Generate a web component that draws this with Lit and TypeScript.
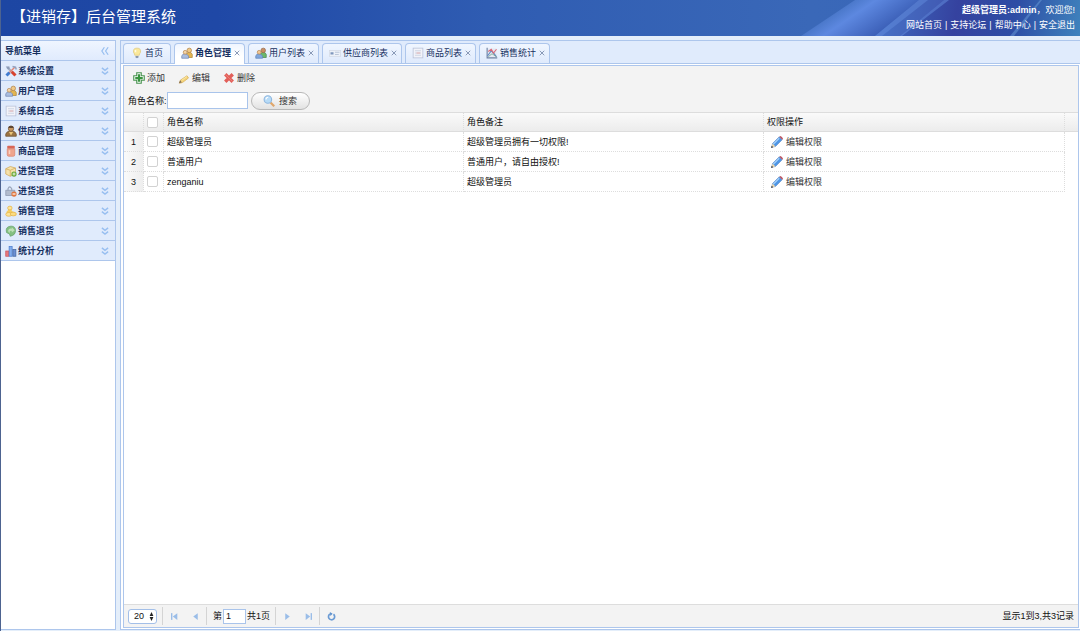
import { LitElement, html, css, svg, TemplateResult } from 'lit';
import { customElement, property, state } from 'lit/decorators.js';

const art: Record<string, TemplateResult> = {
  tools: svg`<path d="M3 3l10 10" stroke="#a3aec4" stroke-width="3"/><path d="M1 2l3 4 2-1 0-3z" fill="#8c9bb8"/><path d="M9 9l5 5" stroke="#d8422e" stroke-width="4"/><path d="M13 3L5 11" stroke="#e58471" stroke-width="2"/><path d="M10 2l4 1 1 3" stroke="#93a2bf" stroke-width="2" fill="none"/><path d="M6 10l-4 4" stroke="#3f7bd0" stroke-width="4"/>`,
  users: svg`<path d="M7 14v-4q1-3 4-3t4 3v4z" fill="#e3b552" stroke="#b08a3c"/><circle cx="11" cy="4.500" r="3" fill="#f0c988" stroke="#b08346"/><path d="M1 15v-3q1-3 4-3t5 3v3z" fill="#a9bddf" stroke="#7689b4"/><circle cx="5.500" cy="7" r="2.500" fill="#f3d4a6" stroke="#b98a56"/>`,
  usersGreen: svg`<path d="M7 14v-4q1-3 4-3t4 3v4z" fill="#6cb868" stroke="#4c8955"/><circle cx="11" cy="4.500" r="3" fill="#ca8f62" stroke="#96694a"/><path d="M1 15v-3q1-3 4-3t5 3v3z" fill="#7fa6dc" stroke="#6488bb"/><circle cx="5.500" cy="7" r="2.500" fill="#efc795" stroke="#b98a56"/>`,
  log: svg`<rect x="1.500" y="1.500" width="13" height="13" fill="#f2f3f9" stroke="#b6bfd6"/><path d="M4 5h8M4 8h8M4 11h8" stroke="#c3cbde"/><path d="M6 8h5" stroke="#e6a19c"/>`,
  person: svg`<path d="M1 15v-3q1-4 7-4t7 4v3z" fill="#9b7443" stroke="#6d5233"/><path d="M5 9h6l-3 5z" fill="#ecc678"/><circle cx="8" cy="5" r="3.500" fill="#c99860" stroke="#6b4d31"/><path d="M4.500 4q0-3 3.500-3t3.500 3z" fill="#5e4733"/>`,
  jar: svg`<rect x="3" y="1" width="10" height="4" rx="1" fill="#d96656"/><path d="M3 5h10v8q0 2-2 2H5q-2 0-2-2z" fill="#efa48d" stroke="#db8573"/><path d="M6 7v5" stroke="#fbd1c1" stroke-width="2"/>`,
  boxAdd: svg`<path d="M1 5l6-3 7 2v8l-7 3-6-3z" fill="#f6e2ab" stroke="#d0a858"/><path d="M1 5l6 2 7-3M7 7v8" stroke="#d0a858" fill="none"/><circle cx="12" cy="12" r="3.500" fill="#6aa93a"/><path d="M12 10v4M10 12h4" stroke="#fff"/>`,
  bagOut: svg`<path d="M1 7h12l1 7H1z" fill="#b3bccd" stroke="#8d98af"/><path d="M4 8V5q2-5 5 0v3" stroke="#98a4ba" fill="none" stroke-width="1.500"/><circle cx="12" cy="12" r="3.500" fill="#e0773f"/><path d="M10 12h4" stroke="#fff" stroke-width="1.500"/>`,
  coins: svg`<path d="M4 3q4-3 5 0v5l6 3v3H2V9l2-2z" fill="#f5ce61"/><ellipse cx="6.500" cy="4" rx="3" ry="2.500" fill="#fce498" stroke="#e5b54f"/><ellipse cx="5" cy="12.500" rx="4" ry="2.500" fill="#fce498" stroke="#e5b54f"/><ellipse cx="11" cy="12" rx="4" ry="2.500" fill="#fbdc80" stroke="#e5b54f"/>`,
  returns: svg`<path d="M8 1.500q6 0 6 6t-7 7.500l-1-3-4-2q-2-8 6-8.500z" fill="#84c081" stroke="#68a26c"/><path d="M4 8q1-4 5-3V3l4 4-4 3V8q-3-1-3 3" fill="#bfe0b7"/>`,
  chart: svg`<rect x="1" y="8" width="4" height="7" fill="#e8787b" stroke="#cb5560"/><rect x="5.500" y="2" width="4" height="13" fill="#83aeed" stroke="#4c7cce"/><rect x="10.500" y="6" width="4" height="9" fill="#6a8fd4" stroke="#45669f"/>`,
  bulb: svg`<path d="M5 11q0-2-1.500-3.500Q2 1.500 8 1.500t4.500 6Q11 9 11 11z" fill="#fae89a" stroke="#e0ca7d"/><path d="M6 4v3" stroke="#fffbe2" stroke-width="2"/><path d="M6 12h4v2l-2 1-2-1z" fill="#8996aa"/>`,
  card: svg`<rect x="0.500" y="4.500" width="15" height="8" fill="#edf1f8" stroke="#d3dae6"/><path d="M2 7h4v3H2z" fill="#7f97bd"/><path d="M8 7h6M8 10h5" stroke="#a9b7cf"/>`,
  line: svg`<path d="M2 2h12v11H2z" fill="#e5e9f3"/><path d="M1.500 1v13.500H15" stroke="#6f82a2" stroke-width="1.500" fill="none"/><path d="M2 12l5-7 3 3 4 5" stroke="#5f86c0" stroke-width="1.500" fill="none"/><path d="M3 6l4-3 3 5 4-5" stroke="#d96a79" stroke-width="1.500" fill="none"/><path d="M3 13l5-4 6 4" stroke="#6a9c85" fill="none"/>`,
  add: svg`<path d="M5 1h6v4h4v6h-4v4H5v-4H1V5h4z" fill="#fff" stroke="#4a9450" stroke-width="1.500"/><path d="M8 3v10M3 8h10" stroke="#39943e" stroke-width="3"/>`,
  pencil: svg`<path d="M2 15l1-4 9-6 2 3-8 6z" fill="#f4d37a" stroke="#d9b25c"/><path d="M1 15l2-4 2 3z" fill="#86735e"/><path d="M5 11l7-5" stroke="#fff0b3"/>`,
  cross: svg`<path d="M3 3l10 10M13 3L3 13" stroke="#e25f59" stroke-width="4.500"/><path d="M3 3l10 10" stroke="#ee8780" stroke-width="1"/>`,
  search: svg`<path d="M10 10l5 5" stroke="#dfa66b" stroke-width="3"/><circle cx="6.500" cy="6" r="5" fill="#b7dbf7" stroke="#8fb7df" stroke-width="1.500"/><path d="M4 6q0-3 3-3" stroke="#fff" fill="none" stroke-width="1.500"/>`,
  bluePencil: svg`<path d="M1 15l1-5 9-9 4 4-9 9z" fill="#4f96e6" stroke="#5b84bd" stroke-width=".7"/><path d="M3 11l8-8" stroke="#a8d3fa" stroke-width="1.500"/><path d="M11 1l4 4 1-2-3-3z" fill="#b9525f"/><path d="M1 15l1-5 4 4z" fill="#efd7ac"/><path d="M0 16l1-3 2 2z" fill="#333"/>`,
  down: svg`<path d="M3 3l5 4 5-4M3 9l5 4 5-4" stroke="#98bff0" stroke-width="2.200" fill="none"/>`,
  left: svg`<path d="M7 2L3 8l4 6M13 2L9 8l4 6" stroke="#98bff0" stroke-width="2" fill="none"/>`,
  close: svg`<path d="M2 2l12 12M14 2L2 14" stroke="#8293b2" stroke-width="2.500"/>`,
  first: svg`<path d="M3 2v12" stroke="#9abde8" stroke-width="2.500"/><path d="M13 2v12L5 8z" fill="#9abde8"/>`,
  prev: svg`<path d="M12 2v12L4 8z" fill="#9abde8"/>`,
  next: svg`<path d="M4 2v12l8-6z" fill="#9abde8"/>`,
  last: svg`<path d="M13 2v12" stroke="#9abde8" stroke-width="2.500"/><path d="M3 2v12l8-6z" fill="#9abde8"/>`,
  refresh: svg`<path d="M11.500 4a5.500 5.500 0 1 1-6-.5" stroke="#6b9bd4" stroke-width="3" fill="none"/><path d="M5 0l5 3-4 4z" fill="#5a8fcd"/>`,
  updown: svg`<path d="M8 0l6 7H2zM8 16l6-7H2z" fill="#222"/>`,
};

@customElement('app-icon')
class AppIcon extends LitElement {
  @property() name = '';
  static styles = css`
    :host { display: block; flex: none; width: 12px; height: 12px; }
    svg { display: block; width: 100%; height: 100%; }
  `;
  render() {
    return html`<svg viewBox="0 0 16 16" preserveAspectRatio="none" aria-hidden="true">${art[this.name]}</svg>`;
  }
}

const menu = [
  ['tools', '系统设置'], ['users', '用户管理'], ['log', '系统日志'], ['person', '供应商管理'], ['jar', '商品管理'],
  ['boxAdd', '进货管理'], ['bagOut', '进货退货'], ['coins', '销售管理'], ['returns', '销售退货'], ['chart', '统计分析'],
];
const tabs = [
  ['bulb', '首页'], ['users', '角色管理'], ['usersGreen', '用户列表'], ['card', '供应商列表'], ['log', '商品列表'], ['line', '销售统计'],
];
const rows = [
  ['超级管理员', '超级管理员拥有一切权限!'],
  ['普通用户', '普通用户，请自由授权!'],
  ['zenganiu', '超级管理员'],
];

@customElement('app-root')
class AppRoot extends LitElement {
  @state() private active = 1;

  static styles = css`
    :host {
      display: flex; flex-direction: column; height: 100vh; box-sizing: border-box; overflow: hidden;
      background: #e4eefa; color: #111; border-left: 1px solid #4d6390;
      font: 9px/12px "Liberation Sans", "Noto Sans CJK SC", sans-serif;
    }
    * { box-sizing: border-box; }
    button, input, select { font: inherit; color: inherit; margin: 0; padding: 0; }
    button { border: 0; background: none; display: flex; align-items: center; white-space: nowrap; }
    a { color: inherit; text-decoration: none; }
    .top {
      position: relative; flex: none; height: 36px; padding: 0 5px 0 10px; color: #fff;
      display: flex; justify-content: space-between; align-items: center;
      background: linear-gradient(90deg, #1d46a3 0%, #1f48a6 20%, #2f5cb2 45%, #3a68b8 75%, #3765ba 100%);
    }
    .beams { position: absolute; right: 0; top: 0; width: 280px; height: 36px; }
    .title { position: relative; margin: 0; padding-bottom: 3px; font-size: 15px; line-height: 20px; font-weight: 400; }
    .account { position: relative; text-align: right; line-height: 15px; }
    .links { display: flex; gap: 3px; }
    .work { flex: 1; min-height: 0; display: flex; gap: 4px; padding: 4px 0 1px; }
    .side { flex: none; width: 115px; border: 1px solid #adc6ec; border-left: 0; background: #fff; }
    .sidehead, .item {
      width: 100%; height: 20px; border-bottom: 1px solid #adc6ec; padding: 0 5px 0 4px;
      display: flex; align-items: center; font-weight: 700; color: #17305f; background: #e0ebfc;
    }
    .sidehead { background: linear-gradient(#eff5ff, #e0ebfd); margin: 0; font-size: 9px; }
    .sidehead .label { padding-left: 0; }
    .label { flex: 1; text-align: left; padding-left: 1px; }
    .arrow { width: 10px; height: 10px; }
    .main { flex: 1; min-width: 0; display: flex; flex-direction: column; border: 1px solid #adc6ec; border-right: 0; background: #fff; }
    .tabs { flex: none; height: 23px; display: flex; align-items: flex-end; gap: 3px; padding: 0 2px; background: #e0ebfc; border-bottom: 1px solid #adc6ec; }
    .tab {
      height: 20px; display: flex; align-items: center; border: 1px solid #adc6ec; border-bottom: 0; border-radius: 4px 4px 0 0;
      background: linear-gradient(#f0f6ff, #dfeafc); color: #17305f; padding: 0 4px 2px 6px;
    }
    .tab.home { padding: 0 7px 2px; }
    .tab.on { background: linear-gradient(#eff5ff, #fff 60%); height: 21px; margin-bottom: -1px; padding-bottom: 3px; font-weight: 700; }
    .tabbtn { gap: 2px; }
    .x { margin-left: 3px; }
    .x app-icon { width: 6px; height: 6px; }
    .pane { flex: 1; min-height: 0; margin: 1px 1px 1px 2px; border: 1px solid #adc6ec; display: flex; flex-direction: column; }
    .tools { flex: none; background: #f3f3f3; border-bottom: 1px solid #ddd; padding: 3px 4px 1px; }
    .actions { display: flex; gap: 13px; height: 18px; padding-left: 5px; color: #333; }
    .actions button { gap: 2px; }
    .find { display: flex; align-items: center; height: 24px; padding-top: 3px; }
    .find input { width: 81px; height: 17px; border: 1px solid #a9c4eb; background: #fff; margin-right: 3px; padding: 0 2px; }
    .find button {
      height: 18px; width: 59px; justify-content: center; gap: 4px; color: #333; border: 1px solid #b8b8b8; border-radius: 9px;
      background: linear-gradient(#fff, #e2e2e2);
    }
    .gridwrap { flex: 1; min-height: 0; overflow: hidden; }
    table { width: 100%; table-layout: fixed; border-collapse: separate; border-spacing: 0; }
    th, td { height: 20px; padding: 0 3px; text-align: left; font-weight: 400; border-right: 1px dotted #ddd; border-bottom: 1px dotted #ddd; overflow: hidden; white-space: nowrap; }
    thead th { height: 19px; background: linear-gradient(#fafafa, #ececec); border-bottom: 1px solid #ddd; }
    .num { width: 20px; text-align: center; padding: 0; background: linear-gradient(90deg, #fafafa, #eee); }
    thead .num { background: linear-gradient(#fafafa, #ececec); }
    .check { width: 20px; padding: 0 3px; }
    .wide { width: 300px; }
    .end { width: 13px; border-right: 0; }
    td.end { border-bottom: 0; }
    input[type='checkbox'] { appearance: none; display: block; width: 11px; height: 11px; border: 1px solid #d2d2d2; border-radius: 2px; background: #fff; }
    .grant { gap: 3px; padding-left: 4px; color: #333; }
    .pager { flex: none; height: 23px; display: flex; align-items: center; padding: 0 4px; background: #f3f3f3; border-top: 1px solid #ddd; }
    .size { position: relative; }
    .size select { appearance: none; display: block; width: 29px; height: 15px; padding-left: 5px; border: 1px solid #a3bfe8; border-radius: 3px; background: #fff; }
    .size app-icon { position: absolute; right: 3px; top: 3px; width: 5px; height: 9px; pointer-events: none; }
    .sep { width: 1px; height: 18px; background: #d4d4d4; margin: 0 6px 0 5px; }
    .pager button { padding: 0 1px; }
    .pager button app-icon { width: 9px; height: 9px; }
    .nav { display: flex; gap: 10px; }
    .page { display: flex; align-items: center; }
    .page input { width: 23px; height: 15px; border: 1px solid #a9c4eb; background: #fff; margin: 0 1px; padding: 0 2px; }
    .total { margin-left: auto; }
  `;

  render() {
    return html`
      <header class="top">
        <svg class="beams" viewBox="0 0 280 36" preserveAspectRatio="none" aria-hidden="true">
          <defs>
            <linearGradient id="edge" gradientUnits="userSpaceOnUse" x1="1" y1="36" x2="24" y2="70"><stop stop-color="#5b88dc" stop-opacity=".5"/><stop offset=".3" stop-color="#5d88e0"/><stop offset="1" stop-color="#3c60b8"/></linearGradient>
            <linearGradient id="deep" gradientUnits="userSpaceOnUse" x1="90" y1="0" x2="280" y2="36"><stop stop-color="#3e67bd"/><stop offset=".35" stop-color="#35429f"/><stop offset=".65" stop-color="#2d4da5"/><stop offset="1" stop-color="#3f83bd"/></linearGradient>
          </defs>
          <path d="M1 36L55 0h80L81 36z" fill="url(#edge)"/>
          <path d="M75 36L119 0h161v36z" fill="url(#deep)"/>
          <path d="M75 36L119 0h9L82 36zM100 36l44-36h5L102 36z" fill="#6590df" opacity=".5"/>
          <path d="M75 36L119 0h25l-44 36z" fill="#5a82d4" opacity=".3"/>
          <path d="M210 36l30-36h2l-28 36z" fill="#7bafe5" opacity=".4"/>
        </svg>
        <h1 class="title">【进销存】后台管理系统</h1>
        <div class="account">
          <div><b>超级管理员:admin</b>，欢迎您!</div>
          <nav class="links"><a href="#">网站首页</a>|<a href="#">支持论坛</a>|<a href="#">帮助中心</a>|<a href="#">安全退出</a></nav>
        </div>
      </header>
      <div class="work">
        <aside class="side">
          <h2 class="sidehead"><span class="label">导航菜单</span><app-icon class="arrow" name="left"></app-icon></h2>
          ${menu.map(([icon, text]) => html`<button class="item"><app-icon name=${icon}></app-icon><span class="label">${text}</span><app-icon class="arrow" name="down"></app-icon></button>`)}
        </aside>
        <main class="main">
          <div class="tabs">
            ${tabs.map(([icon, text], i) => html`<div class="tab ${i === 0 ? 'home' : ''} ${i === this.active ? 'on' : ''}">
              <button class="tabbtn" @click=${() => (this.active = i)}><app-icon name=${icon}></app-icon>${text}</button>
              ${i ? html`<button class="x" aria-label="关闭"><app-icon name="close"></app-icon></button>` : ''}
            </div>`)}
          </div>
          <section class="pane">
            <div class="tools">
              <div class="actions">
                <button><app-icon name="add"></app-icon>添加</button>
                <button><app-icon name="pencil"></app-icon>编辑</button>
                <button><app-icon name="cross"></app-icon>删除</button>
              </div>
              <form class="find" @submit=${(e: Event) => e.preventDefault()}>
                <label for="role">角色名称:</label><input id="role" type="text">
                <button><app-icon name="search"></app-icon>搜索</button>
              </form>
            </div>
            <div class="gridwrap">
              <table>
                <thead><tr>
                  <th class="num"></th><th class="check"><input type="checkbox" aria-label="全选"></th>
                  <th class="wide">角色名称</th><th class="wide">角色备注</th><th>权限操作</th><th class="end"></th>
                </tr></thead>
                <tbody>${rows.map(([name, note], i) => html`<tr>
                  <td class="num">${i + 1}</td><td class="check"><input type="checkbox" aria-label=${name}></td>
                  <td>${name}</td><td>${note}</td>
                  <td><button class="grant"><app-icon name="bluePencil"></app-icon>编辑权限</button></td><td class="end"></td>
                </tr>`)}</tbody>
              </table>
            </div>
            <footer class="pager">
              <div class="size"><select aria-label="每页记录数"><option>20</option><option>50</option></select><app-icon name="updown"></app-icon></div>
              <i class="sep"></i>
              <div class="nav"><button aria-label="第一页"><app-icon name="first"></app-icon></button><button aria-label="上一页"><app-icon name="prev"></app-icon></button></div>
              <i class="sep"></i>
              <div class="page"><label for="page">第</label><input id="page" type="text" value="1"><span>共1页</span></div>
              <i class="sep"></i>
              <div class="nav"><button aria-label="下一页"><app-icon name="next"></app-icon></button><button aria-label="最后一页"><app-icon name="last"></app-icon></button></div>
              <i class="sep"></i>
              <button aria-label="刷新"><app-icon name="refresh"></app-icon></button>
              <span class="total">显示1到3,共3记录</span>
            </footer>
          </section>
        </main>
      </div>`;
  }
}
